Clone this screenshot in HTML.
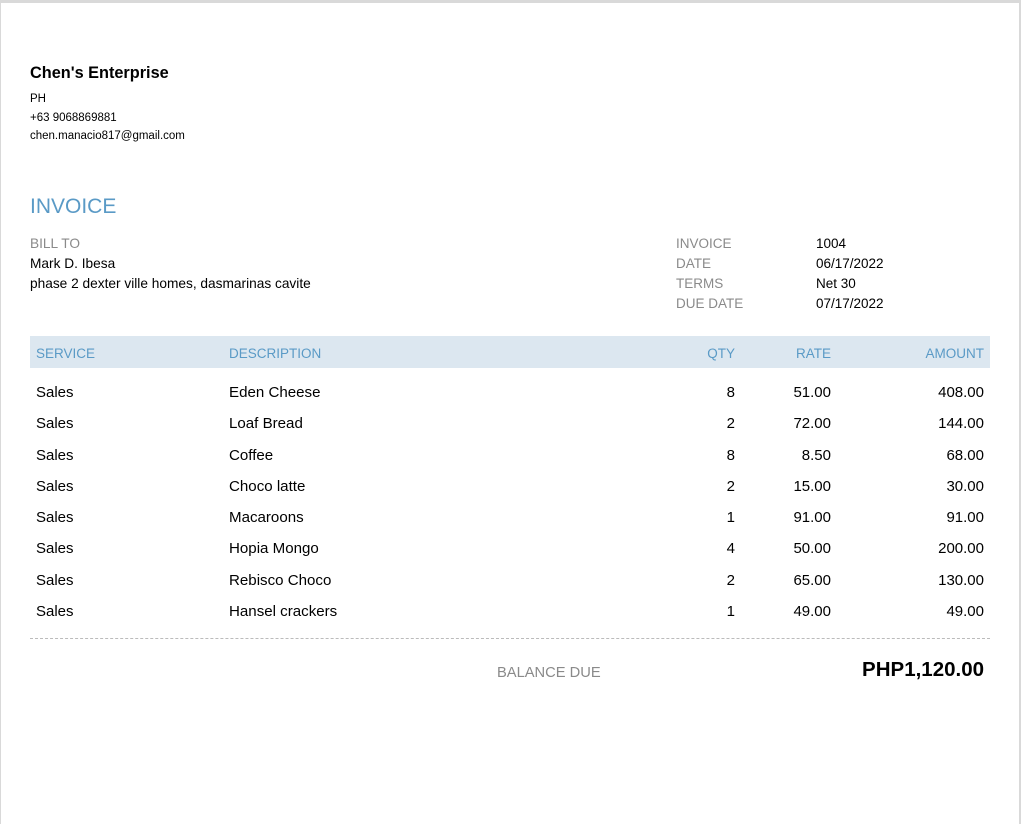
<!DOCTYPE html><html><head><style>
body{margin:0;background:#d9d9d9;font-family:"Liberation Sans",Arial,sans-serif;width:1021px;height:824px;overflow:hidden;position:relative}
.pg{position:absolute;left:1px;top:3px;width:1018px;height:821px;background:#fff}
.a{position:absolute;white-space:nowrap}
.g{color:#8a8a8a}
.r{text-align:right}
</style></head><body><div class="pg"></div>
<div class="a" style="left:30px;top:64px;font-size:16.3px;font-weight:bold">Chen's Enterprise</div>
<div class="a" style="left:30px;top:90px;font-size:11.5px;line-height:18.5px">PH<br>+63 9068869881<br>chen.manacio817@gmail.com</div>
<div class="a" style="left:30px;top:195px;font-size:21px;color:#5a9ac6">INVOICE</div>
<div class="a" style="left:30px;top:234px;font-size:13.7px;line-height:20px"><span class="g">BILL TO</span><br>Mark D. Ibesa<br>phase 2 dexter ville homes, dasmarinas cavite</div>
<div class="a g" style="left:676px;top:234px;font-size:13.5px;line-height:20px">INVOICE<br>DATE<br>TERMS<br>DUE DATE</div>
<div class="a" style="left:816px;top:234px;font-size:13.5px;line-height:20px">1004<br>06/17/2022<br>Net 30<br>07/17/2022</div>
<div class="a" style="left:30px;top:336px;width:960px;height:32px;background:#dce7f0"></div>
<div class="a" style="left:36px;top:346px;font-size:13.5px;color:#5a9ac6">SERVICE</div>
<div class="a" style="left:229px;top:346px;font-size:13.5px;color:#5a9ac6">DESCRIPTION</div>
<div class="a r" style="right:286px;top:346px;font-size:13.5px;color:#5a9ac6">QTY</div>
<div class="a r" style="right:190px;top:346px;font-size:13.5px;color:#5a9ac6">RATE</div>
<div class="a r" style="right:37px;top:346px;font-size:13.5px;color:#5a9ac6">AMOUNT</div>
<div class="a" style="left:36px;top:377px;font-size:15px;line-height:31.3px">Sales<br>Sales<br>Sales<br>Sales<br>Sales<br>Sales<br>Sales<br>Sales</div>
<div class="a" style="left:229px;top:377px;font-size:15.1px;line-height:31.3px">Eden Cheese<br>Loaf Bread<br>Coffee<br>Choco latte<br>Macaroons<br>Hopia Mongo<br>Rebisco Choco<br>Hansel crackers</div>
<div class="a r" style="right:286px;top:377px;font-size:15px;line-height:31.3px">8<br>2<br>8<br>2<br>1<br>4<br>2<br>1</div>
<div class="a r" style="right:190px;top:377px;font-size:15px;line-height:31.3px">51.00<br>72.00<br>8.50<br>15.00<br>91.00<br>50.00<br>65.00<br>49.00</div>
<div class="a r" style="right:37px;top:377px;font-size:15px;line-height:31.3px">408.00<br>144.00<br>68.00<br>30.00<br>91.00<br>200.00<br>130.00<br>49.00</div>
<div class="a" style="left:30px;top:638px;width:960px;border-top:1px dashed #bbb"></div>
<div class="a g" style="left:497px;top:665px;font-size:14.7px">BALANCE DUE</div>
<div class="a r" style="right:37px;top:658px;font-size:20.5px;font-weight:bold">PHP1,120.00</div>
</body></html>
